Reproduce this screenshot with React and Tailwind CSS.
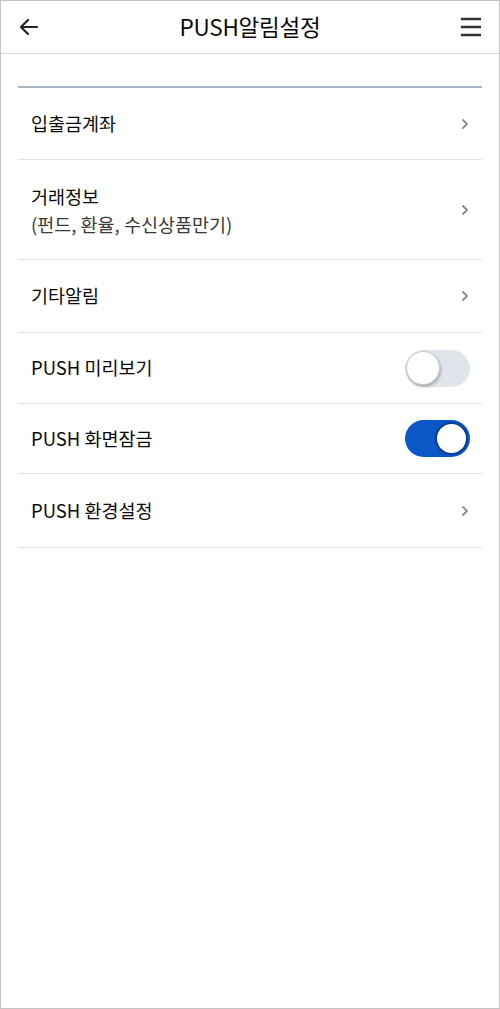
import React from 'react';

const Chevron = () => (
  <svg width="10" height="14" viewBox="0 0 10 14" className="mr-[12px]">
    <path d="M3 3l4 4-4 4" fill="none" stroke="#8a8a8a" strokeWidth="1.8" strokeLinecap="round" strokeLinejoin="round" />
  </svg>
);

const Toggle = ({ on }) =>
  on ? (
    <div className="w-[65px] h-[37px] rounded-full bg-[#0c57c8] flex items-center justify-end pr-[2px]">
      <div className="w-[33px] h-[33px] rounded-full bg-white border-2 border-[#0a3f8f]" />
    </div>
  ) : (
    <div className="w-[65px] h-[37px] rounded-full bg-[#e1e5eb] flex items-center pl-[1px]">
      <div className="w-[34px] h-[34px] rounded-full bg-white border border-[#c8c8c8] shadow-[1px_2px_3px_rgba(0,0,0,0.25)]" />
    </div>
  );

const Row = ({ children, right, h }) => (
  <div className={`flex items-center justify-between border-b border-[#e3e3e3] pl-[13px] ${h}`}>
    <div>{children}</div>
    {right}
  </div>
);

export default function App() {
  return (
    <div className="w-[500px] h-[1009px] bg-white border border-[#c4c4c4] text-[#0a0a0a]" style={{ fontFamily: '"Noto Sans CJK KR", "Noto Sans", sans-serif' }}>
      {/* Header */}
      <div className="h-[53px] flex items-center justify-between px-[17px] border-b border-[#d9d9d9]">
        <svg width="22" height="22" viewBox="0 0 22 22">
          <path d="M19 11H3M10 4l-7 7 7 7" fill="none" stroke="#222" strokeWidth="2.2" strokeLinecap="round" strokeLinejoin="round" />
        </svg>
        <div className="text-[22.5px] tracking-[-0.2px] mt-[-1px]">PUSH알림설정</div>
        <svg width="22" height="20" viewBox="0 0 22 20">
          <path d="M1 2h20M1 10h20M1 18h20" stroke="#333" strokeWidth="2.4" />
        </svg>
      </div>

      <div className="px-[17px] pt-[32px]">
        <div className="h-[2px] bg-[#aab4c2]" />
        <Row h="h-[72px]" right={<Chevron />}>
          <span className="text-[18.5px]">입출금계좌</span>
        </Row>
        <Row h="h-[100px]" right={<Chevron />}>
          <div className="text-[18.5px] leading-[28px]">거래정보</div>
          <div className="text-[18.5px] text-[#3a3a3a] leading-[28px]">(펀드, 환율, 수신상품만기)</div>
        </Row>
        <Row h="h-[73px]" right={<Chevron />}>
          <span className="text-[18.5px]">기타알림</span>
        </Row>
        <Row h="h-[71px]" right={<div className="mr-[12px]"><Toggle on={false} /></div>}>
          <span className="text-[18.5px]">PUSH 미리보기</span>
        </Row>
        <Row h="h-[70px]" right={<div className="mr-[12px]"><Toggle on /></div>}>
          <span className="text-[18.5px]">PUSH 화면잠금</span>
        </Row>
        <Row h="h-[74px]" right={<Chevron />}>
          <span className="text-[18.5px]">PUSH 환경설정</span>
        </Row>
      </div>
    </div>
  );
}
